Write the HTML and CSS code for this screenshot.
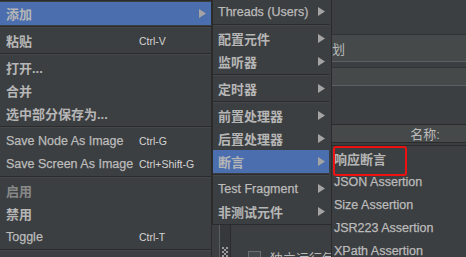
FILE: index.html
```html
<!DOCTYPE html>
<html lang="zh">
<head>
<meta charset="utf-8">
<title>JMeter context menu</title>
<link rel="stylesheet" href="styles.css">
</head>
<body>
<div class="app">
  <div class="tree"></div>
  <div class="splitter">
    <svg class="grip" width="6" height="10" viewBox="0 0 6 10">
      <g fill="#9a9a9a">
        <rect x="0" y="0" width="2" height="2"/><rect x="4" y="0" width="2" height="2"/>
        <rect x="2" y="2" width="2" height="2"/>
        <rect x="0" y="4" width="2" height="2"/><rect x="4" y="4" width="2" height="2"/>
        <rect x="2" y="6" width="2" height="2"/>
        <rect x="0" y="8" width="2" height="2"/><rect x="4" y="8" width="2" height="2"/>
      </g>
    </svg>
  </div>
  <div class="editor">
    <div class="title-area"></div>
    <div class="name-row">
      <span class="field-label"></span>
      <div class="field">测试计划</div>
    </div>
    <div class="comment-row">
      <span class="field-label"></span>
      <div class="field small"></div>
    </div>
    <div class="section"></div>
    <div class="table-header">
      <div class="th">名称:</div>
      <div class="th">值</div>
    </div>
    <div class="table-body"></div>
    <div class="check-row">
      <span class="checkbox"></span>
      <span class="check-text">独立运行每个线程组</span>
    </div>
  </div>
</div>

<div class="menu main-menu">
  <div class="item sel cjk"><span class="label">添加</span><svg class="arrow" width="7" height="9" viewBox="0 0 7 9"><path d="M0 0L7 4.5L0 9Z"/></svg></div>
  <div class="sep"></div>
  <div class="item cjk"><span class="label">粘贴</span><span class="key">Ctrl-V</span></div>
  <div class="sep"></div>
  <div class="item cjk"><span class="label">打开...</span></div>
  <div class="item cjk"><span class="label">合并</span></div>
  <div class="item cjk"><span class="label">选中部分保存为...</span></div>
  <div class="sep"></div>
  <div class="item"><span class="label">Save Node As Image</span><span class="key">Ctrl-G</span></div>
  <div class="item"><span class="label">Save Screen As Image</span><span class="key">Ctrl+Shift-G</span></div>
  <div class="sep"></div>
  <div class="item cjk disabled"><span class="label">启用</span></div>
  <div class="item cjk"><span class="label">禁用</span></div>
  <div class="item"><span class="label">Toggle</span><span class="key">Ctrl-T</span></div>
  <div class="sep"></div>
</div>

<div class="menu sub-menu">
  <div class="item"><span class="label">Threads (Users)</span><svg class="arrow" width="7" height="9" viewBox="0 0 7 9"><path d="M0 0L7 4.5L0 9Z"/></svg></div>
  <div class="sep"></div>
  <div class="item cjk"><span class="label">配置元件</span><svg class="arrow" width="7" height="9" viewBox="0 0 7 9"><path d="M0 0L7 4.5L0 9Z"/></svg></div>
  <div class="item cjk"><span class="label">监听器</span><svg class="arrow" width="7" height="9" viewBox="0 0 7 9"><path d="M0 0L7 4.5L0 9Z"/></svg></div>
  <div class="sep"></div>
  <div class="item cjk"><span class="label">定时器</span><svg class="arrow" width="7" height="9" viewBox="0 0 7 9"><path d="M0 0L7 4.5L0 9Z"/></svg></div>
  <div class="sep"></div>
  <div class="item cjk"><span class="label">前置处理器</span><svg class="arrow" width="7" height="9" viewBox="0 0 7 9"><path d="M0 0L7 4.5L0 9Z"/></svg></div>
  <div class="item cjk"><span class="label">后置处理器</span><svg class="arrow" width="7" height="9" viewBox="0 0 7 9"><path d="M0 0L7 4.5L0 9Z"/></svg></div>
  <div class="item sel cjk"><span class="label">断言</span><svg class="arrow" width="7" height="9" viewBox="0 0 7 9"><path d="M0 0L7 4.5L0 9Z"/></svg></div>
  <div class="sep"></div>
  <div class="item"><span class="label">Test Fragment</span><svg class="arrow" width="7" height="9" viewBox="0 0 7 9"><path d="M0 0L7 4.5L0 9Z"/></svg></div>
  <div class="item cjk"><span class="label">非测试元件</span><svg class="arrow" width="7" height="9" viewBox="0 0 7 9"><path d="M0 0L7 4.5L0 9Z"/></svg></div>
</div>

<div class="menu assert-menu">
  <div class="item cjk"><span class="label">响应断言</span></div>
  <div class="item"><span class="label">JSON Assertion</span></div>
  <div class="item"><span class="label">Size Assertion</span></div>
  <div class="item"><span class="label">JSR223 Assertion</span></div>
  <div class="item"><span class="label">XPath Assertion</span></div>
</div>

<div class="red-box"></div>
</body>
</html>
```

FILE: styles.css
```css
html, body {
  margin: 0;
  padding: 0;
}
body {
  width: 466px;
  height: 257px;
  overflow: hidden;
  position: relative;
  background: #3c3f41;
  color: #bbbbbb;
  font-family: "Liberation Sans", "Noto Sans CJK SC", sans-serif;
  font-size: 12.5px;
}

/* ---------- background application ---------- */
.app {
  display: flex;
  height: 257px;
}
.tree {
  width: 219px;
  flex: none;
  background: #3c3f41;
}
.splitter {
  width: 10px;
  flex: none;
  border-left: 1px solid #5b5e60;
  border-right: 1px solid #2b2b2b;
  background: #36393b;
  display: flex;
  flex-direction: column;
  justify-content: flex-end;
  align-items: center;
}
.grip {
  display: block;
}
.editor {
  flex: 1;
  display: flex;
  flex-direction: column;
  min-width: 0;
}
.title-area {
  height: 34px;
  flex: none;
}
.name-row, .comment-row {
  display: flex;
  flex: none;
}
.name-row {
  height: 28px;
}
.comment-row {
  height: 19px;
  margin-top: 5px;
}
.field-label {
  width: 56px;
  flex: none;
}
.field {
  flex: 1;
  background: #45494a;
  border-top: 1px solid #313335;
  border-bottom: 1px solid #5e6163;
  padding-left: 6px;
  font-size: 13px;
  display: flex;
  align-items: center;
  color: #bbbbbb;
}
.section {
  height: 38px;
  flex: none;
}
.table-header {
  height: 17px;
  flex: none;
  display: flex;
  margin-left: 10px;
  background: #45494a;
  border-top: 1px solid #2b2b2b;
  border-bottom: 1px solid #2b2b2b;
}
.th {
  flex: none;
  width: 368px;
  font-size: 13px;
  display: flex;
  align-items: center;
  justify-content: center;
  border-right: 1px solid #2b2b2b;
}
.table-body {
  height: 108px;
  flex: none;
}
.check-row {
  display: flex;
  align-items: flex-start;
  padding-left: 17px;
  height: 20px;
  flex: none;
}
.checkbox {
  width: 11px;
  height: 11px;
  border: 1px solid #6b6e70;
  background: #43494a;
  flex: none;
}
.check-text {
  margin-left: 9px;
  margin-top: 1px;
  font-size: 13px;
  line-height: 14px;
}

/* ---------- popup menus ---------- */
.menu {
  position: absolute;
  box-sizing: border-box;
  background: #3c3f41;
  border: 1px solid #2b2b2b;
}
.main-menu {
  left: -1px;
  top: 0;
  width: 213px;
  height: 280px;
  padding-top: 1px;
}
.sub-menu {
  left: 212px;
  top: -1px;
  width: 120px;
  padding-right: 2px;
  padding-bottom: 1px;
}
.assert-menu {
  left: 331px;
  top: 145px;
  width: 160px;
  height: 130px;
  padding-top: 1px;
}
.item {
  height: 23px;
  display: flex;
  align-items: center;
  padding-left: 6px;
  white-space: nowrap;
  -webkit-text-stroke: 0.25px #bbbbbb;
}
.sub-menu .item {
  padding-left: 5px;
}
.assert-menu .item {
  padding-left: 2px;
}
.item.cjk {
  -webkit-text-stroke: 0;
}
.item.cjk .label {
  font-size: 13px;
  font-weight: bold;
  color: #b6b6b6;
}
.item.sel {
  background: #4b6eaf;
}
.item.disabled .label {
  color: #888888;
}
.main-menu .label {
  width: 133px;
  flex: none;
}
.key {
  font-size: 10.5px;
  color: #d4d4d4;
  -webkit-text-stroke: 0;
}
.arrow {
  margin-left: auto;
  margin-right: 5px;
  fill: #a4a4a4;
  flex: none;
}
.sub-menu .arrow {
  margin-right: 4px;
}
.sep {
  height: 4px;
  padding-top: 1px;
  box-sizing: border-box;
}
.sep::before {
  content: "";
  display: block;
  height: 1px;
  background: #2b2b2b;
  border-bottom: 1px solid #45484a;
}

.red-box {
  position: absolute;
  left: 333px;
  top: 146px;
  width: 74px;
  height: 30px;
  box-sizing: border-box;
  border: 2px solid #ee1111;
  border-radius: 3px;
}
```
